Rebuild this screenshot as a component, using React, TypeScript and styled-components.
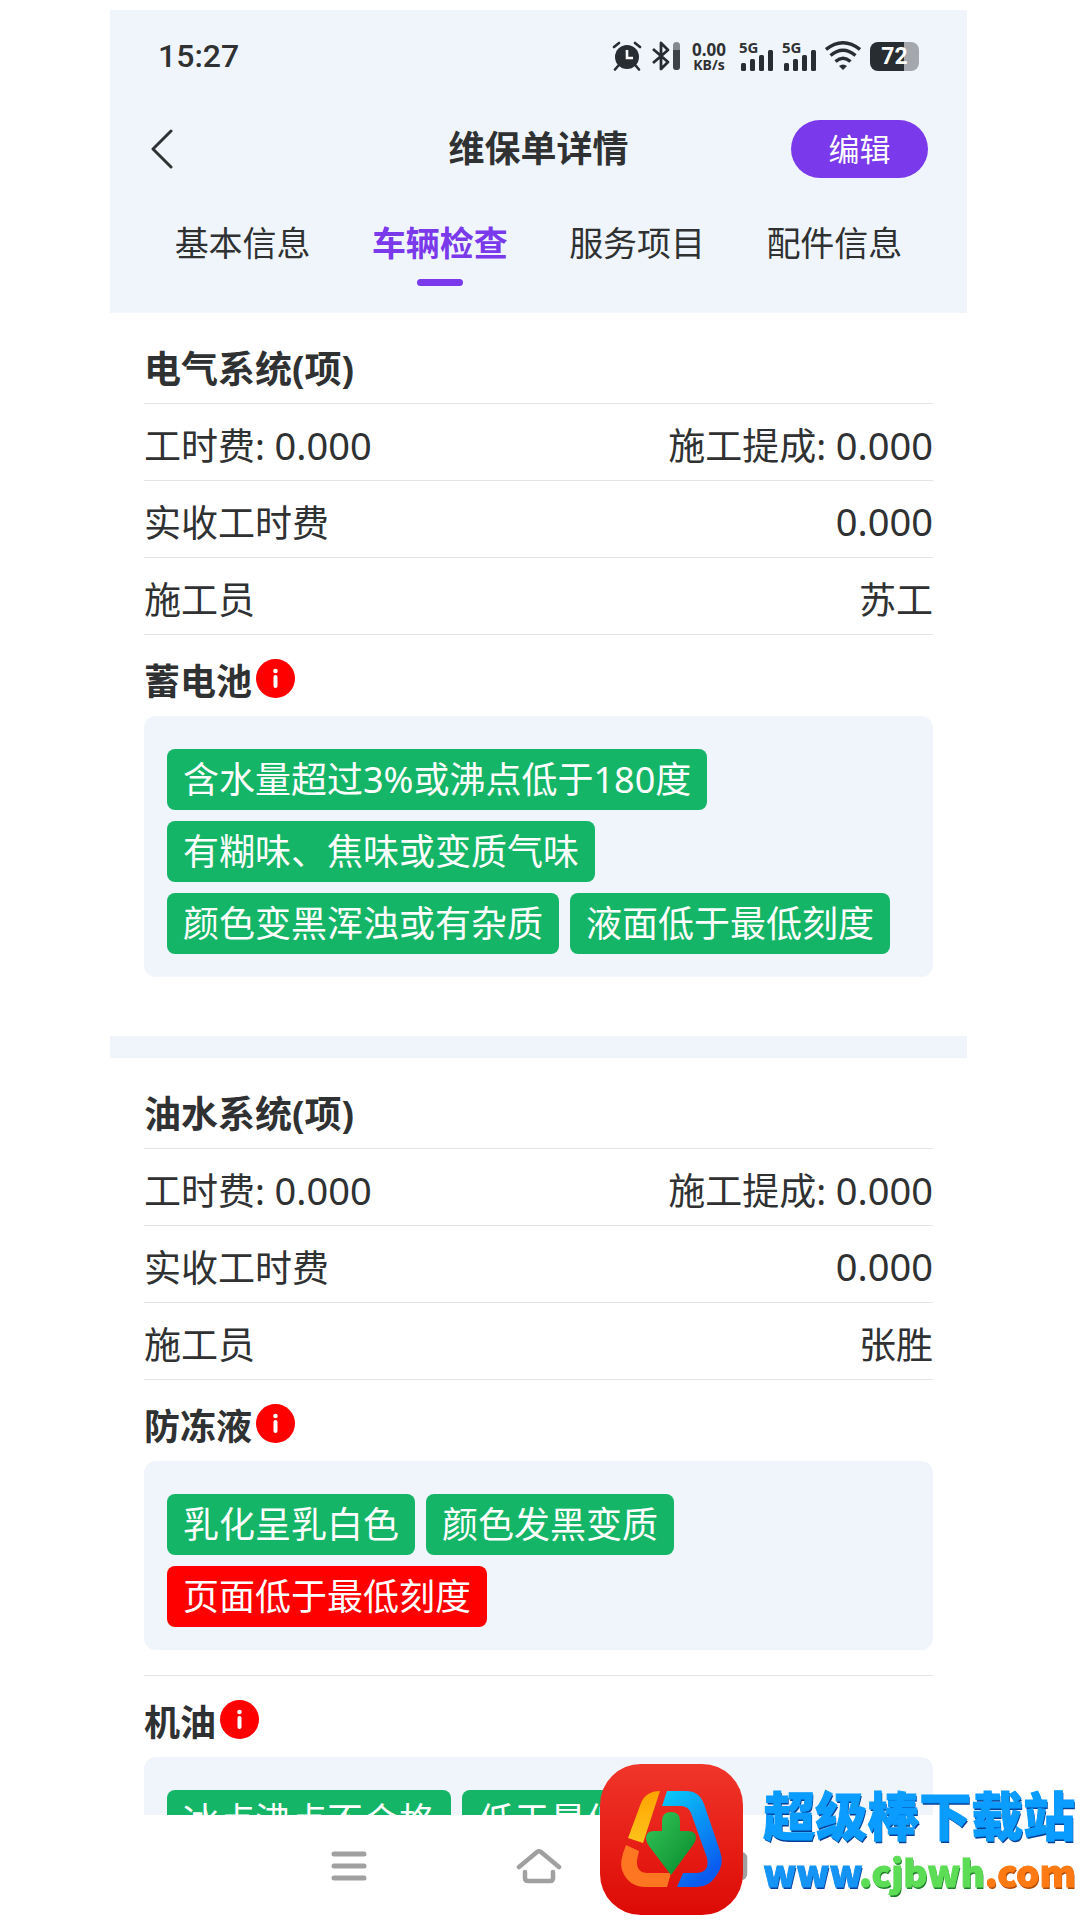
import React from 'react';
import styled, { createGlobalStyle } from 'styled-components';

interface Check {
    name: string;
    tags: Array<{ text: string; danger?: boolean }>;
}

interface System {
    title: string;
    worker: string;
    checks: Check[];
}

const themeColors = {
    text: '#2f3132',
    primary: '#7a39ea',
    surface: '#f0f5fc',
    success: '#15b567',
    danger: '#ff0000',
    border: '#e3e3e3',
    nav: '#a0a0a0',
};

const systems: System[] = [
    {
        title: '电气系统(项)',
        worker: '苏工',
        checks: [
            {
                name: '蓄电池',
                tags: [
                    { text: '含水量超过3%或沸点低于180度' },
                    { text: '有糊味、焦味或变质气味' },
                    { text: '颜色变黑浑浊或有杂质' },
                    { text: '液面低于最低刻度' },
                ],
            },
        ],
    },
    {
        title: '油水系统(项)',
        worker: '张胜',
        checks: [
            {
                name: '防冻液',
                tags: [
                    { text: '乳化呈乳白色' },
                    { text: '颜色发黑变质' },
                    { text: '页面低于最低刻度', danger: true },
                ],
            },
            {
                name: '机油',
                tags: [{ text: '冰点沸点不合格' }, { text: '低于最低刻度' }],
            },
        ],
    },
];

const tabs = ['基本信息', '车辆检查', '服务项目', '配件信息'];

const GlobalStyle = createGlobalStyle`
    * {
        box-sizing: border-box;
    }

    body {
        margin: 0;
        background-color: #fff;
        color: ${themeColors.text};
        font-family: 'Noto Sans', 'Noto Sans CJK SC', sans-serif;
    }

    button {
        background: none;
        border: none;
        color: inherit;
        cursor: pointer;
        font-family: inherit;
        padding: 0;
    }
`;

const Screen = styled.div`
    display: flex;
    flex-direction: column;
    height: 100vh;
    padding: 10px 113px 0 110px;
`;

const Header = styled.header`
    background-color: ${themeColors.surface};
    flex-shrink: 0;
    padding: 0 34px 27px;
`;

const StatusBar = styled.div`
    align-items: center;
    display: flex;
    justify-content: space-between;
    height: 92px;
    padding: 0 14px;
`;

const Time = styled.span`
    font-family: Roboto, sans-serif;
    font-size: 32px;
    font-weight: 500;
`;

const StatusIcons = styled.div`
    align-items: center;
    display: flex;
    gap: 9px;
`;

const NetSpeed = styled.div`
    display: flex;
    flex-direction: column;
    font-size: 17px;
    font-weight: 700;
    line-height: 17px;
    margin: 0 4px 0 2px;
    text-align: center;

    small {
        font-size: 14px;
        line-height: 14px;
    }
`;

const SignalWrapper = styled.span`
    display: grid;
    font-size: 15px;
    font-weight: 700;
    line-height: 13px;

    > * {
        grid-area: 1 / 1;
    }
`;

const Battery = styled.span`
    align-items: center;
    background: linear-gradient(90deg, #272d31 70%, #a4a8ad 70%);
    border-radius: 8px;
    color: #fff;
    display: flex;
    font-family: Roboto, sans-serif;
    font-size: 23px;
    font-weight: 700;
    height: 29px;
    justify-content: center;
    width: 49px;
`;

const TitleBar = styled.div`
    align-items: center;
    display: grid;
    grid-template-columns: 1fr auto 1fr;
    height: 94px;
    padding: 0 5px;
`;

const BackButton = styled.button`
    display: flex;
    justify-self: start;
`;

const PageTitle = styled.h1`
    font-size: 36px;
    line-height: 54px;
    margin: 0;
`;

const EditButton = styled.button`
    background-color: ${themeColors.primary};
    border-radius: 29px;
    color: #fff;
    font-size: 31px;
    height: 58px;
    justify-self: end;
    line-height: 54px;
    width: 137px;
`;

const Tabs = styled.nav`
    display: grid;
    grid-template-columns: repeat(4, 1fr);
    padding-top: 21px;
`;

const Tab = styled.button<{ $active: boolean }>`
    align-items: center;
    color: ${props => (props.$active ? themeColors.primary : 'inherit')};
    display: flex;
    flex-direction: column;
    font-size: 34px;
    font-weight: ${props => (props.$active ? 700 : 400)};
    gap: 10px;
    line-height: 52px;

    &::after {
        background-color: ${props => (props.$active ? themeColors.primary : 'transparent')};
        border-radius: 4px;
        content: '';
        height: 7px;
        width: 46px;
    }
`;

const Body = styled.main`
    flex: 1;
    min-height: 0;
    overflow: hidden;
`;

const Section = styled.section`
    padding: 0 34px 59px;

    & + & {
        border-top: 22px solid ${themeColors.surface};
    }
`;

const SectionTitle = styled.h2`
    border-bottom: 1px solid ${themeColors.border};
    font-size: 37px;
    line-height: 54px;
    margin: 0;
    padding: 29px 0 7px;
`;

const Row = styled.div`
    border-bottom: 1px solid ${themeColors.border};
    display: flex;
    font-size: 37px;
    justify-content: space-between;
    line-height: 54px;
    padding: 15px 0 7px;
`;

const Amount = styled.span`
    font-size: 38px;
    line-height: 50px;
`;

const CheckItem = styled.div`
    & + & {
        border-top: 1px solid ${themeColors.border};
        margin-top: 25px;
    }
`;

const CheckTitle = styled.h3`
    align-items: flex-start;
    display: flex;
    font-size: 36px;
    gap: 4px;
    line-height: 54px;
    margin: 0;
    padding: 20px 0 7px;
`;

const InfoButton = styled.button`
    display: flex;
    padding-top: 4px;
`;

const TagPanel = styled.div`
    background-color: ${themeColors.surface};
    border-radius: 12px;
    display: flex;
    flex-wrap: wrap;
    gap: 11px;
    padding: 33px 23px 23px;
`;

const Tag = styled.span<{ $danger?: boolean }>`
    background-color: ${props => (props.$danger ? themeColors.danger : themeColors.success)};
    border-radius: 8px;
    color: #fff;
    font-size: 36px;
    line-height: 61px;
    padding: 0 16px;
`;

const NavBar = styled.nav`
    align-items: center;
    background-color: #fff;
    display: grid;
    flex-shrink: 0;
    grid-template-columns: repeat(3, 190px);
    height: 105px;
    justify-content: center;
    justify-items: center;
`;

const Watermark = styled.a`
    align-items: center;
    bottom: 5px;
    display: flex;
    gap: 20px;
    position: fixed;
    right: 4px;
    text-decoration: none;
`;

const WatermarkText = styled.span`
    display: flex;
    flex-direction: column;
    font-family: 'Noto Sans CJK SC', sans-serif;
    font-weight: 900;
`;

const WatermarkName = styled.span`
    color: #0a9cff;
    font-size: 52px;
    line-height: 62px;
    text-shadow: 1px 2px 0 #063f96;
    -webkit-text-stroke: 1px #0a9cff;
`;

const WatermarkUrl = styled.span`
    font-size: 37px;
    line-height: 52px;
`;

const UrlPart = styled.span<{ $color: string; $shadow: string }>`
    color: ${props => props.$color};
    text-shadow: 1px 2px 0 ${props => props.$shadow};
    -webkit-text-stroke: 1px ${props => props.$color};
`;

const AlarmIcon = () => (
    <svg width="30" height="30" viewBox="0 0 30 30" fill="none" stroke="#272d31" strokeWidth="2.6" strokeLinecap="round">
        <circle cx="15" cy="16" r="12" fill="#272d31" stroke="none" />
        <path d="M2 6 7 2M28 6l-5-4M6 25l-3 3.500M24 25l3 3.500" />
        <path d="M15 9v8h6" stroke="#fff" strokeLinecap="butt" />
    </svg>
);

const BluetoothIcon = () => (
    <svg width="30" height="30" viewBox="0 0 30 30" fill="none">
        <path d="M2 8l15 13-7 7V2l7 7L2 22" stroke="#272d31" strokeWidth="2.8" strokeLinejoin="round" />
        <rect x="22" y="1" width="7" height="28" rx="3.500" fill="#85898d" />
        <path d="M22 9h7v16.500a3.500 3.500 0 0 1-7 0z" fill="#3d4246" />
    </svg>
);

const Signal = () => (
    <SignalWrapper>
        <span>5G</span>
        <svg width="34" height="30" viewBox="0 0 34 30" fill="#272d31">
            <rect x="2" y="22" width="5" height="8" rx="1.500" />
            <rect x="11" y="18" width="5" height="12" rx="1.500" />
            <rect x="20" y="14" width="5" height="16" rx="1.500" />
            <rect x="29" y="9" width="5" height="21" rx="1.500" />
        </svg>
    </SignalWrapper>
);

const WifiIcon = () => (
    <svg width="36" height="30" viewBox="0 0 36 30" fill="none" stroke="#272d31" strokeWidth="3.4">
        <path d="M1 8.500Q18-5 35 8.500M5.500 14.500Q18 4 30.500 14.500M10.500 20.500Q18 14 25.500 20.500" />
        <path d="M14 25q4-3 8 0l-4 4z" fill="#272d31" stroke="none" />
    </svg>
);

const InfoIcon = () => (
    <svg width="39" height="39" viewBox="0 0 39 39">
        <circle cx="19.500" cy="19.500" r="19.500" fill={themeColors.danger} />
        <circle cx="19.500" cy="12" r="2.300" fill="#fff" />
        <rect x="17.500" y="16" width="4" height="13" rx="2" fill="#fff" />
    </svg>
);

const Logo = () => (
    <svg width="143" height="151" viewBox="0 0 143 151">
        <defs>
            <linearGradient id="red" x2="0" y2="1">
                <stop offset="0" stopColor="#f0352a" />
                <stop offset="1" stopColor="#dd0a05" />
            </linearGradient>
            <linearGradient id="yellow" x2="0" y2="1">
                <stop offset="0" stopColor="#ffa400" />
                <stop offset="1" stopColor="#ffc31c" />
            </linearGradient>
            <linearGradient id="blue" x2="0.5" y2="1">
                <stop offset="0" stopColor="#08cdf8" />
                <stop offset="1" stopColor="#0a5cf0" />
            </linearGradient>
            <linearGradient id="green" x2="1" y2="1">
                <stop offset="0" stopColor="#35c558" />
                <stop offset="1" stopColor="#078a2d" />
            </linearGradient>
        </defs>
        <rect width="143" height="151" rx="41" fill="url(#red)" />
        <path d="M60 27 43 79 28 74 41 39Q46 27 60 27z" fill="url(#yellow)" />
        <path d="M67 27h19q13 0 18 13l16 47q5 14-4 25-7 11-19 11H77l6-14h14q13-1 10-15L91 49q-3-7-10-7H62z" fill="url(#blue)" />
        <path d="M26 81l13 6-2 9q-1 13 11 13h23l-4 14H46q-18 0-24-17-3-8 4-25z" fill="#ff7622" />
        <path d="M62 57q0-9 9-9t9 9v10h8q8 0 8 7 0 3-3 7L71 111 49 82q-3-4-3-8 0-7 8-7h8z" fill="url(#green)" />
    </svg>
);

const CheckBlock = ({ check }: { check: Check }) => (
    <CheckItem>
        <CheckTitle>
            {check.name}
            <InfoButton aria-label={check.name}>
                <InfoIcon />
            </InfoButton>
        </CheckTitle>
        <TagPanel>
            {check.tags.map(tag => (
                <Tag key={tag.text} $danger={tag.danger}>
                    {tag.text}
                </Tag>
            ))}
        </TagPanel>
    </CheckItem>
);

const SystemSection = ({ system }: { system: System }) => (
    <Section>
        <SectionTitle>{system.title}</SectionTitle>
        <Row>
            <span>
                工时费: <Amount>0.000</Amount>
            </span>
            <span>
                施工提成: <Amount>0.000</Amount>
            </span>
        </Row>
        <Row>
            <span>实收工时费</span>
            <Amount>0.000</Amount>
        </Row>
        <Row>
            <span>施工员</span>
            <span>{system.worker}</span>
        </Row>
        {system.checks.map(check => (
            <CheckBlock key={check.name} check={check} />
        ))}
    </Section>
);

const App = () => {
    const [activeTab, setActiveTab] = React.useState(tabs[1]);

    return (
        <>
            <GlobalStyle />
            <Screen>
                <Header>
                    <StatusBar>
                        <Time>15:27</Time>
                        <StatusIcons>
                            <AlarmIcon />
                            <BluetoothIcon />
                            <NetSpeed>
                                <span>0.00</span>
                                <small>KB/s</small>
                            </NetSpeed>
                            <Signal />
                            <Signal />
                            <WifiIcon />
                            <Battery>72</Battery>
                        </StatusIcons>
                    </StatusBar>
                    <TitleBar>
                        <BackButton aria-label="返回">
                            <svg width="28" height="40" viewBox="0 0 28 40" fill="none" stroke={themeColors.text}>
                                <path d="M22 2 4 20l18 18" strokeWidth="3" strokeLinecap="round" strokeLinejoin="round" />
                            </svg>
                        </BackButton>
                        <PageTitle>维保单详情</PageTitle>
                        <EditButton>编辑</EditButton>
                    </TitleBar>
                    <Tabs>
                        {tabs.map(tab => (
                            <Tab key={tab} $active={tab === activeTab} onClick={() => setActiveTab(tab)}>
                                {tab}
                            </Tab>
                        ))}
                    </Tabs>
                </Header>
                <Body>
                    {systems.map(system => (
                        <SystemSection key={system.title} system={system} />
                    ))}
                </Body>
                <NavBar>
                    <button aria-label="菜单">
                        <svg width="36" height="30" viewBox="0 0 36 30" stroke={themeColors.nav} strokeWidth="5" strokeLinecap="round">
                            <path d="M3 3h30M3 15h30M3 27h30" />
                        </svg>
                    </button>
                    <button aria-label="主页">
                        <svg width="46" height="36" viewBox="0 0 46 36" fill="none" stroke={themeColors.nav} strokeWidth="4.500" strokeLinecap="round" strokeLinejoin="round">
                            <path d="M3 19 21 4q2-1.500 4 0l18 15M9 24v6q0 3 3 3h22q3 0 3-3v-6" />
                        </svg>
                    </button>
                    <button aria-label="后退">
                        <svg width="39" height="30" viewBox="0 0 39 30" fill="none" stroke={themeColors.nav} strokeWidth="4.500">
                            <rect x="3" y="3" width="33" height="24" rx="4" />
                        </svg>
                    </button>
                </NavBar>
            </Screen>
            <Watermark href="#">
                <Logo />
                <WatermarkText>
                    <WatermarkName>超级棒下载站</WatermarkName>
                    <WatermarkUrl>
                        <UrlPart $color="#1494f5" $shadow="#0b3f9c">www</UrlPart>
                        <UrlPart $color="#5ddc55" $shadow="#1d7f2a">.cjbwh</UrlPart>
                        <UrlPart $color="#ff7a12" $shadow="#b04a08">.com</UrlPart>
                    </WatermarkUrl>
                </WatermarkText>
            </Watermark>
        </>
    );
};

export default App;
